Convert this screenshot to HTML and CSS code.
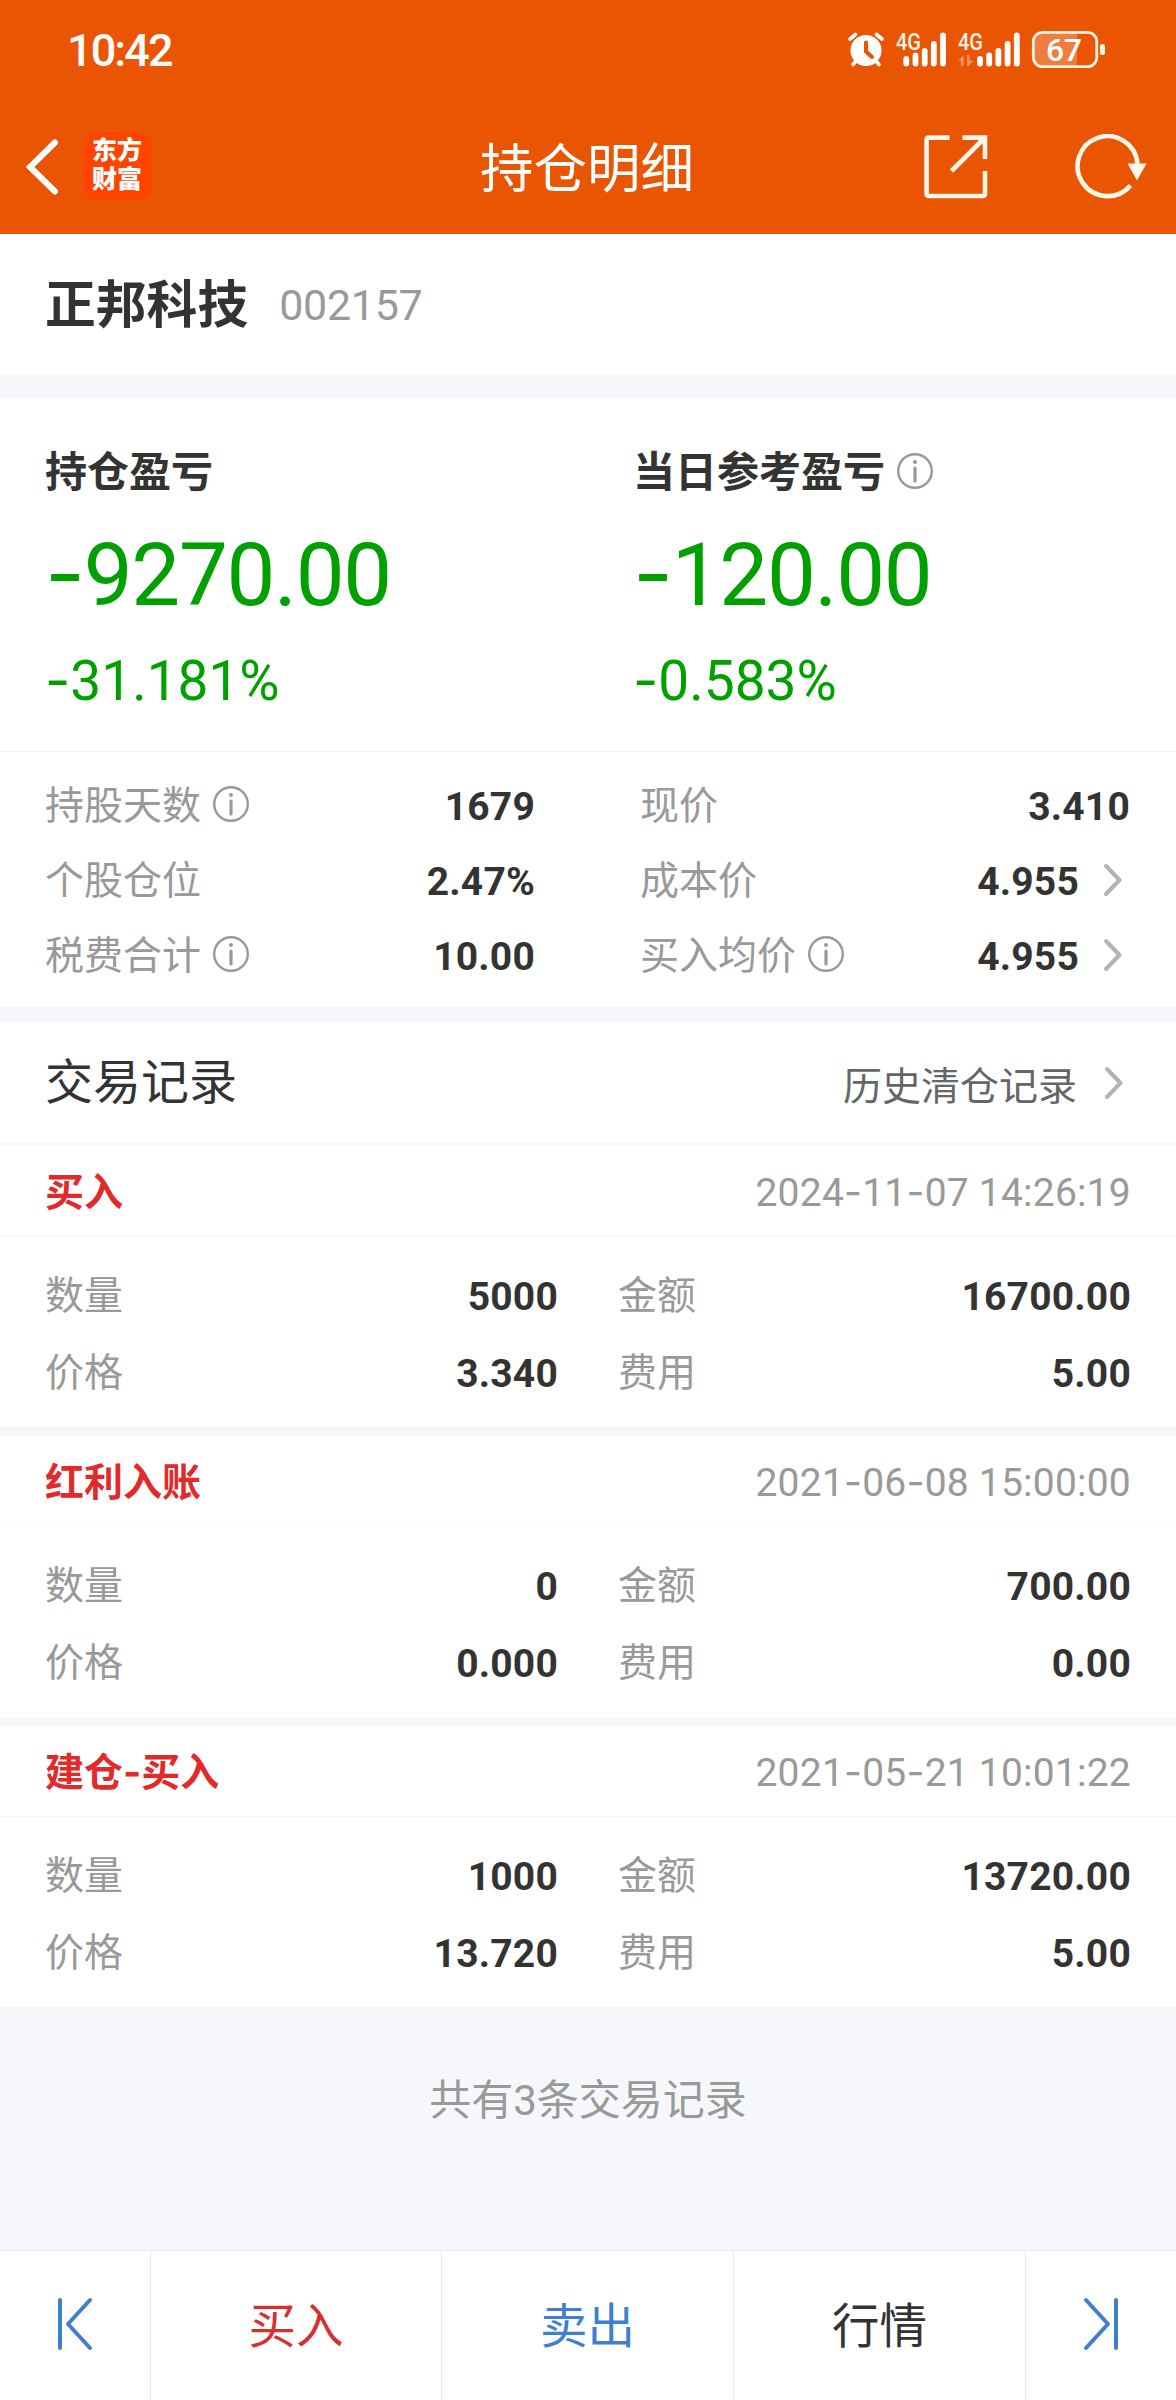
FILE: index.html
```html
<!DOCTYPE html>
<html lang="zh-CN">
<head>
<meta charset="utf-8">
<title>持仓明细</title>
<link rel="stylesheet" href="styles.css">
</head>
<body>
<svg width="0" height="0" class="defs">
  <symbol id="info" viewBox="0 0 36 36"><circle cx="18" cy="18" r="16.8" fill="none" stroke="#999" stroke-width="2.4"/><circle cx="18" cy="9" r="2" fill="#999"/><path d="M18 15V28" stroke="#999" stroke-width="3.2" stroke-linecap="round"/></symbol>
  <symbol id="more" viewBox="0 0 20 34"><path d="M3 3L16.5 17L3 31" fill="none" stroke="#b3b3b3" stroke-width="4" stroke-linecap="round" stroke-linejoin="round"/></symbol>
</svg>
<div class="page">
  <header class="top">
    <div class="status">
      <span class="time">10:42</span>
      <svg class="status-icons" width="264" height="46" viewBox="844 28 264 46">
        <g stroke="#fff" stroke-linecap="round" fill="none">
          <circle cx="866" cy="50.5" r="15.5" fill="#fff" stroke="none"/>
          <path d="M850 39L855.500 34.500M882 39L876.500 34.500M856 61L853 64.500M876 61L879 64.500" stroke-width="3.600"/>
          <path d="M866 42.500V51.500L872 57" stroke="#ea5504" stroke-width="4"/>
          <path d="M906.300 59V63.500M915.500 55.500V63.500M924.700 51V63.500M933.800 44V63.500M943 35.500V63.500" stroke-width="5.800"/>
          <path d="M980 59V63.500M989.200 55.500V63.500M998.400 51V63.500M1007.600 44V63.500M1016.800 35.500V63.500" stroke-width="5.800"/>
        </g>
        <path d="M958.500 61L963.500 55V66H961V61ZM965 61V55H965V66M967 55H969.500V60.500H973.500L968.500 66H967Z" fill="#f59067"/>
        <text x="896" y="49.500" class="net" textLength="25" lengthAdjust="spacingAndGlyphs">4G</text>
        <text x="958" y="49.500" class="net" textLength="25" lengthAdjust="spacingAndGlyphs">4G</text>
        <path d="M1077 32.500H1043Q1034 32.500 1034 42V57Q1034 66.500 1043 66.500H1077Z" fill="#f07d40"/>
        <rect x="1033.300" y="32.300" width="63.500" height="34.400" rx="9.500" fill="none" stroke="#fff3e4" stroke-width="2.800"/>
        <rect x="1100" y="44" width="5" height="11" rx="2.500" fill="#fff3e4"/>
        <text x="1046" y="61" class="level" textLength="36">67</text>
      </svg>
    </div>
    <nav class="nav">
      <svg class="back" width="36" height="60" viewBox="0 0 36 60"><path d="M30 5.500L5 30L30 54.500" fill="none" stroke="#fff" stroke-width="6" stroke-linecap="round"/></svg>
      <div class="logo">东方<br>财富</div>
      <h1>持仓明细</h1>
      <svg class="share" width="64" height="64" viewBox="0 0 64 64"><g fill="none" stroke="#fff7e8" stroke-width="4.600"><path d="M25.500 2.600H5Q2.600 2.600 2.600 5V58.500Q2.600 61 5 61H58.500Q61 61 61 58.500V36M38.500 2.600H61V24M60 3.500L27.500 36"/></g></svg>
      <svg class="reload" width="72" height="66" viewBox="0 0 72 66"><path d="M62.500 30A30 30 0 1 0 55.500 51.500" fill="none" stroke="#fff7e8" stroke-width="4.600"/><path d="M52.500 29.500H71.500L62 46.500Z" fill="#fff7e8"/></svg>
    </nav>
  </header>

  <section class="stock"><b>正邦科技</b><span>002157</span></section>

  <section class="profit">
    <div>
      <h2>持仓盈亏</h2>
      <p class="amount"><i>-</i>9270.00</p>
      <p class="rate"><i>-</i>31.181%</p>
    </div>
    <div>
      <h2>当日参考盈亏<svg class="info"><use href="#info"/></svg></h2>
      <p class="amount"><i>-</i>120.00</p>
      <p class="rate"><i>-</i>0.583%</p>
    </div>
  </section>

  <section class="stats">
    <dl>
      <div><dt>持股天数<svg class="info"><use href="#info"/></svg></dt><dd>1679</dd></div>
      <div><dt>个股仓位</dt><dd>2.47%</dd></div>
      <div><dt>税费合计<svg class="info"><use href="#info"/></svg></dt><dd>10.00</dd></div>
    </dl>
    <dl>
      <div><dt>现价</dt><dd>3.410</dd></div>
      <div><dt>成本价</dt><dd>4.955</dd><svg class="more"><use href="#more"/></svg></div>
      <div><dt>买入均价<svg class="info"><use href="#info"/></svg></dt><dd>4.955</dd><svg class="more"><use href="#more"/></svg></div>
    </dl>
  </section>

  <section class="section-head"><h3>交易记录</h3><a>历史清仓记录</a><svg class="more"><use href="#more"/></svg></section>

  <article class="record">
    <header><b>买入</b><time>2024<i>-</i>11<i>-</i>07 14:26:19</time></header>
    <dl>
      <div><dt>数量</dt><dd>5000</dd></div><div><dt>金额</dt><dd>16700.00</dd></div>
      <div><dt>价格</dt><dd>3.340</dd></div><div><dt>费用</dt><dd>5.00</dd></div>
    </dl>
  </article>
  <article class="record">
    <header><b>红利入账</b><time>2021<i>-</i>06<i>-</i>08 15:00:00</time></header>
    <dl>
      <div><dt>数量</dt><dd>0</dd></div><div><dt>金额</dt><dd>700.00</dd></div>
      <div><dt>价格</dt><dd>0.000</dd></div><div><dt>费用</dt><dd>0.00</dd></div>
    </dl>
  </article>
  <article class="record">
    <header><b>建仓<i>-</i>买入</b><time>2021<i>-</i>05<i>-</i>21 10:01:22</time></header>
    <dl>
      <div><dt>数量</dt><dd>1000</dd></div><div><dt>金额</dt><dd>13720.00</dd></div>
      <div><dt>价格</dt><dd>13.720</dd></div><div><dt>费用</dt><dd>5.00</dd></div>
    </dl>
  </article>

  <p class="total">共有3条交易记录</p>

  <footer class="tabs">
    <span><svg width="36" height="54" viewBox="0 0 36 54"><path d="M3 3V51M33 3L11 27L33 51" fill="none" stroke="#417fcc" stroke-width="4" stroke-linecap="round" stroke-linejoin="round"/></svg></span>
    <span class="buy">买入</span>
    <span class="sell">卖出</span>
    <span>行情</span>
    <span><svg width="36" height="54" viewBox="0 0 36 54"><path d="M33 3V51M3 3L25 27L3 51" fill="none" stroke="#417fcc" stroke-width="4" stroke-linecap="round" stroke-linejoin="round"/></svg></span>
  </footer>
</div>
</body>
</html>
```
FILE: styles.css
```css
* { box-sizing: border-box; margin: 0; padding: 0; }
body {
  width: 1176px;
  background: #f6f7fa;
  color: #333;
  font: 39px/1.2 Roboto, "Noto Sans CJK SC", sans-serif;
}
i { font-family: Inter, sans-serif; font-style: normal; }
svg { display: block; flex: none; }
.defs { position: absolute; }
.page { display: flex; flex-direction: column; height: 2400px; }

.top { height: 234px; background: #ea5504; color: #fff; }
.status { display: flex; justify-content: space-between; height: 100px; padding: 28px 68px 0 67px; }
.time { font-size: 45px; line-height: 46px; font-weight: 500; letter-spacing: -1.900px; }
.net { font: 500 24px Roboto, sans-serif; fill: #fff3e4; }
.level { font: 500 32px Roboto, sans-serif; fill: #fff; }
.nav { display: flex; align-items: center; height: 134px; padding: 0 29px 2px 25px; }
.back, .share, .reload { margin-top: 1px; }
.logo {
  width: 68px; height: 68px; margin-left: 22px; padding-top: 4px;
  border-radius: 14px; background: #ff4400;
  font-size: 25px; line-height: 29px; font-weight: 900; text-align: center;
}
h1 { flex: 1; padding: 8px 0 0 329px; font-size: 53.500px; font-weight: 400; line-height: 64px; }
.reload { margin-left: 87px; }

.stock { display: flex; align-items: center; height: 140px; padding: 4px 0 0 45px; background: #fff; }
.stock b { font-size: 50.800px; }
.stock span { margin-left: 31px; color: #999; font-size: 43px; letter-spacing: -0.300px; }

.profit { display: grid; grid-template-columns: 1fr 1fr; height: 354px; margin-top: 24px; background: #fff; border-bottom: 1px solid #f2f3f5; }
.profit div { padding: 47px 0 0 45px; }
h2 { display: flex; align-items: center; height: 56px; font-size: 42px; }
.info { width: 36px; height: 36px; margin: -4px 0 0 12px; }
.amount, .rate { color: #00a000; }
.amount { height: 100px; margin-top: 23px; font-size: 87px; line-height: 100px; letter-spacing: -1.300px; }
.rate { margin-top: 26px; font-size: 55px; line-height: 60px; }

.stats { display: grid; grid-template-columns: 490px 490px; column-gap: 105px; height: 255px; padding: 17px 45px 0 45px; background: #fff; }
.stats dl > div { display: flex; align-items: center; height: 75px; }
dt { display: flex; align-items: center; color: #999; }
dd { margin-left: auto; padding-top: 1px; font-weight: 700; letter-spacing: 0.200px; }
.more { width: 20px; height: 34px; margin: 0 6px 4px 25px; }
.stats .more { margin-left: 24px; margin-right: 7px; }

.section-head { display: flex; align-items: center; height: 120px; margin-top: 15px; padding: 2px 46px 0 45px; background: #fff; }
h3 { flex: 1; font-size: 48px; font-weight: 400; }
.section-head a { color: #666; padding-top: 8px; margin-right: 2px; }
.section-head .more { margin-bottom: 0; }

.record { height: 281px; margin-bottom: 9px; background: #fff; }
.section-head + .record { margin-top: 4px; }
.record header { display: flex; align-items: center; justify-content: space-between; height: 91px; padding: 4px 45px 0 45px; border-bottom: 1px solid #f5f6f8; }
.record header b { color: #e22a2a; }
time { color: #999; letter-spacing: 0.220px; }
.record dl { display: grid; grid-template-columns: 513px 513px; column-gap: 60px; padding: 21px 45px 0 45px; }
.record dl > div { display: flex; align-items: center; height: 77px; }

.total { margin-top: 60px; color: #999; font-size: 42px; text-align: center; }
.tabs { display: grid; grid-template-columns: 150px 291px 292px 292px 151px; height: 150px; margin-top: auto; background: #fff; border-top: 1px solid #e8e9ec; font-size: 47.500px; }
.tabs span { display: flex; align-items: center; justify-content: center; border-left: 1px solid #e8e9ec; padding-top: 4px; }
.tabs span:first-child { border-left: 0; }
.tabs svg { margin-bottom: 7px; }
.buy { color: #d7302f; }
.sell { color: #3f7fd0; }
```
